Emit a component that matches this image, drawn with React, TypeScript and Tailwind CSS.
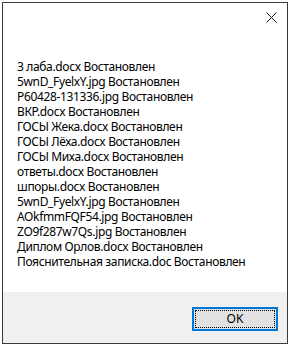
import React from "react";

const files = [
  "3 лаба.docx",
  "5wnD_FyelxY.jpg",
  "P60428-131336.jpg",
  "ВКР.docx",
  "ГОСЫ Жека.docx",
  "ГОСЫ Лёха.docx",
  "ГОСЫ Миха.docx",
  "ответы.docx",
  "шпоры.docx",
  "5wnD_FyelxY.jpg",
  "AOkfmmFQF54.jpg",
  "ZO9f287w7Qs.jpg",
  "Диплом Орлов.docx",
  "Пояснительная записка.doc",
];

export default function App() {
  return (
    <div className="h-[348px] w-[292px] bg-white pl-[2px] pt-[2px]">
      <div
        className="flex h-[342px] w-[286px] flex-col border border-[#3a3a3a] bg-white text-[12px] text-black"
        style={{ fontFamily: '"Noto Sans", "Segoe UI", sans-serif' }}
      >
        <div className="flex h-[30px] justify-end pr-[10px] pt-[8px]">
          <button type="button" aria-label="Close" className="flex h-[12px] w-[12px] items-center justify-center">
            <svg width="11" height="11" viewBox="0 0 11 11" fill="none">
              <path d="M0.5 0.5L10.5 10.5M10.5 0.5L0.5 10.5" stroke="#111" strokeWidth="1" />
            </svg>
          </button>
        </div>

        <div className="flex-1 pl-[14px] pt-[26px] tracking-[-0.35px]">
          {files.map((name, idx) => (
            <div key={idx} className="h-[15px] leading-[15px] whitespace-nowrap">
              {name} Востановлен
            </div>
          ))}
        </div>

        <div className="flex h-[51px] items-start justify-end bg-[#f0f0f0] pr-[9px] pt-[15px]">
          <button
            type="button"
            className="flex h-[24px] w-[86px] items-center justify-center border-2 border-[#0078d7] bg-[#e1e1e1] p-[1px]"
          >
            <span className="flex h-full w-full items-center justify-center border border-dotted border-black leading-none">
              OK
            </span>
          </button>
        </div>
      </div>
    </div>
  );
}
